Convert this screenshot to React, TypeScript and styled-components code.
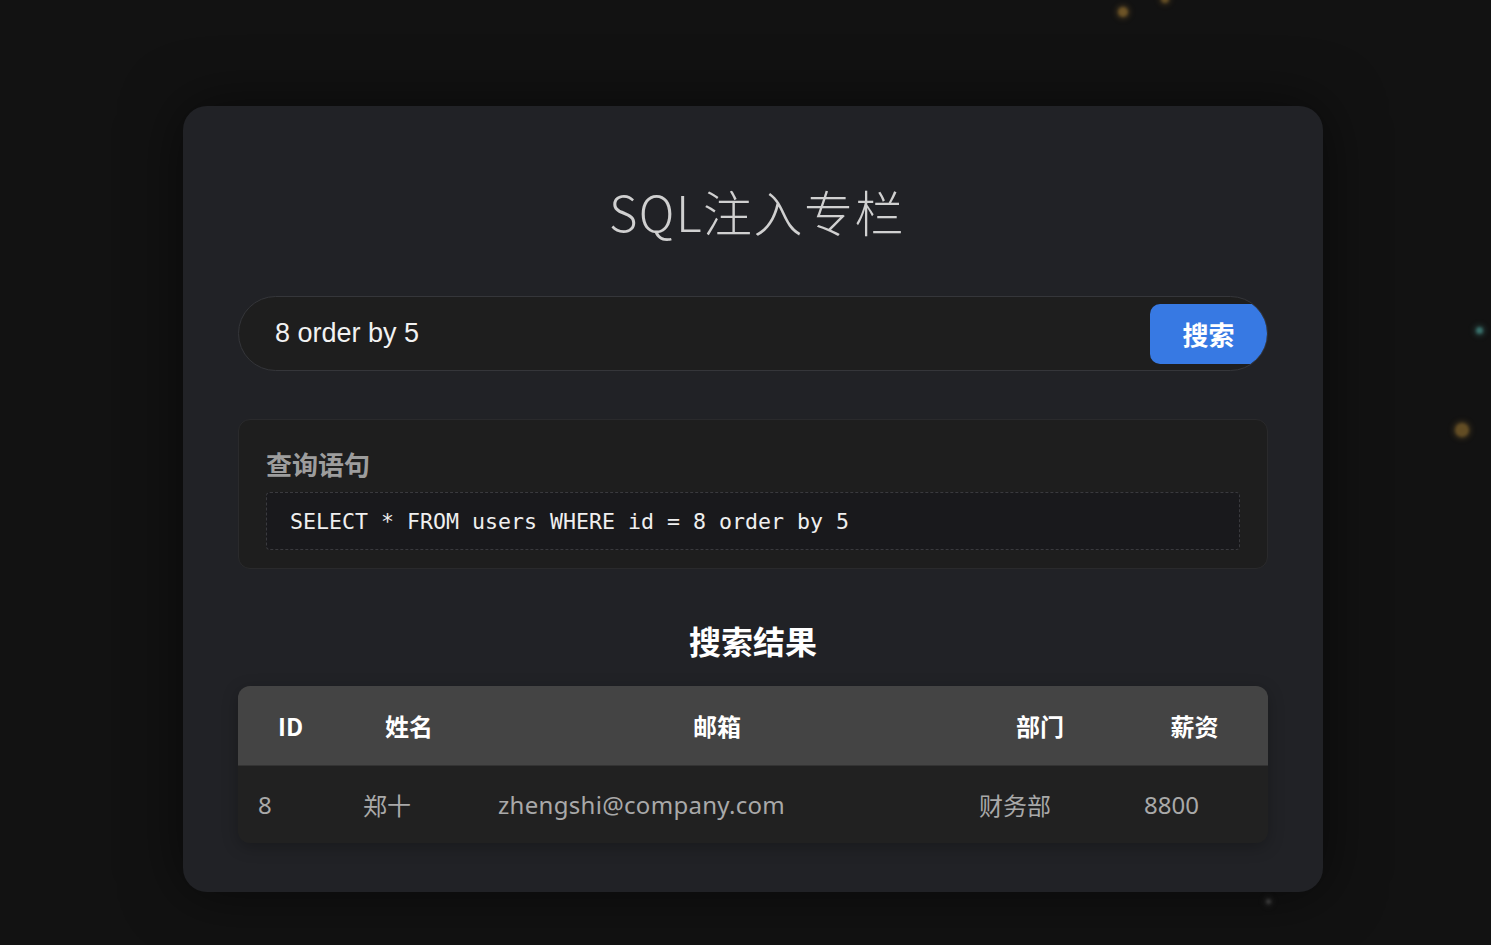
import React from "react";
import styled, { createGlobalStyle } from "styled-components";

const GlobalStyle = createGlobalStyle`
  * { box-sizing: border-box; }
  html, body { margin: 0; padding: 0; background: #121212; }
  body {
    font-family: "Noto Sans", "Noto Sans CJK SC", sans-serif;
    color: #ddd;
  }
`;

const Page = styled.div`
  position: relative;
  min-height: 945px;
  padding-top: 106px;
  overflow: hidden;
  display: flex;
  justify-content: center;
  align-items: flex-start;
`;

const Particle = styled.span<{ $x: number; $y: number; $size: number; $color: string }>`
  position: absolute;
  left: ${(p) => p.$x}px;
  top: ${(p) => p.$y}px;
  width: ${(p) => p.$size}px;
  height: ${(p) => p.$size}px;
  border-radius: 50%;
  background: ${(p) => p.$color};
  filter: blur(1.6px);
  box-shadow: 0 0 6px ${(p) => p.$color};
`;

const Card = styled.main`
  position: relative;
  margin-left: 15px;
  width: 1140px;
  background: #212226;
  border-radius: 24px;
  padding: 73px 55px 49px;
  box-shadow: 0 0 60px rgba(0, 0, 0, 0.55);
`;

const Title = styled.h1`
  margin: 0;
  padding-left: 8px;
  text-align: center;
  font-family: "Noto Sans CJK SC", sans-serif;
  font-weight: 300;
  font-size: 49px;
  line-height: 64px;
  color: #d0d0d0;
  letter-spacing: 1.5px;
`;

const SearchBar = styled.form`
  margin-top: 53px;
  height: 75px;
  border-radius: 38px;
  border: 1px solid #35363a;
  background: #1e1e1e;
  overflow: hidden;
  display: flex;
  align-items: center;
`;

const SearchInput = styled.input`
  flex: 1;
  height: 100%;
  border: none;
  outline: none;
  background: transparent;
  padding: 0 0 0 36px;
  font-family: "Liberation Sans", Arial, sans-serif;
  font-size: 27px;
  color: #f2f2f2;
`;

const SearchButton = styled.button`
  width: 117px;
  height: 60px;
  border: none;
  border-radius: 10px;
  background: #3779e3;
  color: #fff;
  font-family: "Noto Sans CJK SC", sans-serif;
  font-weight: 700;
  font-size: 26px;
  padding: 0;
  cursor: pointer;
`;

const QueryBox = styled.section`
  margin-top: 48px;
  background: #1e1e1e;
  border: 1px solid #2a2a2c;
  border-radius: 12px;
  padding: 25px 27px 18px;
`;

const QueryLabel = styled.h3`
  margin: 0 0 9px;
  font-family: "Noto Sans CJK SC", sans-serif;
  font-weight: 700;
  font-size: 26px;
  line-height: 38px;
  color: #9d9d9d;
`;

const CodeBlock = styled.pre`
  margin: 0;
  height: 58px;
  display: flex;
  align-items: center;
  padding: 0 23px;
  background: #19191c;
  border: 1px dashed #3a3a3e;
  border-radius: 4px;
  font-family: "DejaVu Sans Mono", "Liberation Mono", monospace;
  font-size: 21.6px;
  color: #efefef;
`;

const ResultTitle = styled.h2`
  margin: 51px 0 26px;
  text-align: center;
  font-family: "Noto Sans CJK SC", sans-serif;
  font-weight: 700;
  font-size: 32px;
  line-height: 40px;
  color: #fff;
`;

const Table = styled.table`
  width: 100%;
  border-collapse: separate;
  border-spacing: 0;
  table-layout: fixed;
  border-radius: 12px;
  overflow: hidden;
  box-shadow: 0 4px 16px rgba(0, 0, 0, 0.25);
`;

const HeadCell = styled.th`
  height: 80px;
  background: #444444;
  border-bottom: 1px solid #333;
  text-align: center;
  font-family: "Noto Sans CJK SC", sans-serif;
  font-weight: 700;
  font-size: 24px;
  color: #fff;
  padding: 0;
`;

const BodyCell = styled.td<{ $inset: number }>`
  height: 77px;
  background: #212121;
  text-align: left;
  padding: 0 0 0 ${(p) => p.$inset}px;
  font-family: "Noto Sans", "Noto Sans CJK SC", sans-serif;
  font-size: 24px;
  color: #a9a9a9;
  white-space: nowrap;
`;

const EmailText = styled.span`
  letter-spacing: 0.3px;
`;

const columns = [
  { key: "id", label: "ID", width: 105, inset: 20 },
  { key: "name", label: "姓名", width: 132, inset: 20 },
  { key: "email", label: "邮箱", width: 484, inset: 23 },
  { key: "dept", label: "部门", width: 162, inset: 20 },
  { key: "salary", label: "薪资", width: 147, inset: 23 },
] as const;

type Row = { id: number; name: string; email: string; dept: string; salary: number };

const rows: Row[] = [
  { id: 8, name: "郑十", email: "zhengshi@company.com", dept: "财务部", salary: 8800 },
];

// decorative floating specks in the backdrop
const particles = [
  { x: 1118, y: 7, size: 10, color: "rgba(200,150,60,0.5)" },
  { x: 1161, y: -5, size: 8, color: "rgba(200,150,60,0.45)" },
  { x: 1476, y: 327, size: 7, color: "rgba(90,190,180,0.55)" },
  { x: 1455, y: 423, size: 14, color: "rgba(200,150,60,0.45)" },
  { x: 1266, y: 899, size: 5, color: "rgba(120,120,120,0.55)" },
];

export default function App() {
  return (
    <>
      <GlobalStyle />
      <Page>
        {particles.map((p, i) => (
          <Particle key={i} $x={p.x} $y={p.y} $size={p.size} $color={p.color} />
        ))}
        <Card>
          <Title>SQL注入专栏</Title>
          <SearchBar onSubmit={(e) => e.preventDefault()}>
            <SearchInput defaultValue="8 order by 5" />
            <SearchButton type="submit">搜索</SearchButton>
          </SearchBar>
          <QueryBox>
            <QueryLabel>查询语句</QueryLabel>
            <CodeBlock>SELECT * FROM users WHERE id = 8 order by 5</CodeBlock>
          </QueryBox>
          <ResultTitle>搜索结果</ResultTitle>
          <Table>
            <colgroup>
              {columns.map((c) => (
                <col key={c.key} style={{ width: c.width }} />
              ))}
            </colgroup>
            <thead>
              <tr>
                {columns.map((c) => (
                  <HeadCell key={c.key}>{c.label}</HeadCell>
                ))}
              </tr>
            </thead>
            <tbody>
              {rows.map((r) => (
                <tr key={r.id}>
                  <BodyCell $inset={columns[0].inset}>{r.id}</BodyCell>
                  <BodyCell $inset={columns[1].inset}>{r.name}</BodyCell>
                  <BodyCell $inset={columns[2].inset}>
                    <EmailText>{r.email}</EmailText>
                  </BodyCell>
                  <BodyCell $inset={columns[3].inset}>{r.dept}</BodyCell>
                  <BodyCell $inset={columns[4].inset}>{r.salary}</BodyCell>
                </tr>
              ))}
            </tbody>
          </Table>
        </Card>
      </Page>
    </>
  );
}
